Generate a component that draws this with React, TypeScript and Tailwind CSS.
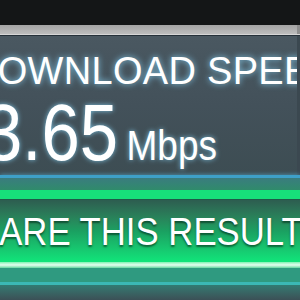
export default function App() {
  return (
    <div className="w-[300px] h-[300px] overflow-hidden flex flex-col bg-[#141617] font-['Liberation_Sans',sans-serif]">
      {/* top black strip */}
      <div className="h-[25px] shrink-0 bg-[#141617]" />
      {/* grey bezel */}
      <div className="h-[9px] shrink-0 bg-gradient-to-b from-[#a4a4a4] to-[#bdbdbd] border-r-[3px] border-[#8e8e8e]" />
      <div className="h-[1px] shrink-0 bg-[#d6d6d6]" />
      <div className="h-[1px] shrink-0 bg-[#26313a]" />

      {/* result panel */}
      <div className="h-[139px] shrink-0 flex flex-col bg-gradient-to-b from-[#4a5861] via-[#43515a] to-[#3d4d53] text-white overflow-hidden border-r-[3px] border-[#3b4850]">
        <div className="mt-[15px] ml-[-30px] whitespace-nowrap text-[38px] leading-[40px] tracking-[0.3px] [text-shadow:0_0_6px_rgba(140,220,255,0.9)]">
          DOWNLOAD SPEED
        </div>
        <div className="mt-[6px] ml-[-16px] whitespace-nowrap flex items-baseline gap-[10px] origin-left scale-x-[0.86] [text-shadow:0_0_6px_rgba(140,220,255,0.8)]">
          <span className="text-[80px] leading-[72px]">3.65</span>
          <span className="text-[43px] leading-[40px]">Mbps</span>
        </div>
      </div>

      {/* divider lines */}
      <div className="h-[3px] shrink-0 bg-[#3ea0c8] shadow-[0_0_4px_rgba(90,190,230,0.8)]" />
      <div className="h-[12px] shrink-0 bg-gradient-to-b from-[#3a7c7e] to-[#2f8b6b]" />
      <div className="h-[9px] shrink-0 bg-[#17e07a]" />
      <div className="h-[1px] shrink-0 bg-[#1f5a48]" />

      {/* share button */}
      <div className="h-[62px] shrink-0 overflow-hidden bg-gradient-to-b from-[#2d5d50] via-[#1aa061] to-[#10e57a]">
        <div className="mt-[12px] ml-[-49px] whitespace-nowrap text-white text-[39px] leading-[40px] origin-left scale-x-[0.89] [text-shadow:0_2px_2px_rgba(0,40,20,0.6)]">
          SHARE THIS RESULT
        </div>
      </div>
      <div className="h-[6px] shrink-0 bg-gradient-to-b from-[#7df2b4] via-[#e4fff0] to-[#5fd6a0]" />
      <div className="h-[14px] shrink-0 bg-[#2f9a80]" />
      <div className="h-[3px] shrink-0 bg-[#3bb8b4]" />
      <div className="flex-1 bg-gradient-to-b from-[#317b72] to-[#3b5056]" />
    </div>
  );
}
